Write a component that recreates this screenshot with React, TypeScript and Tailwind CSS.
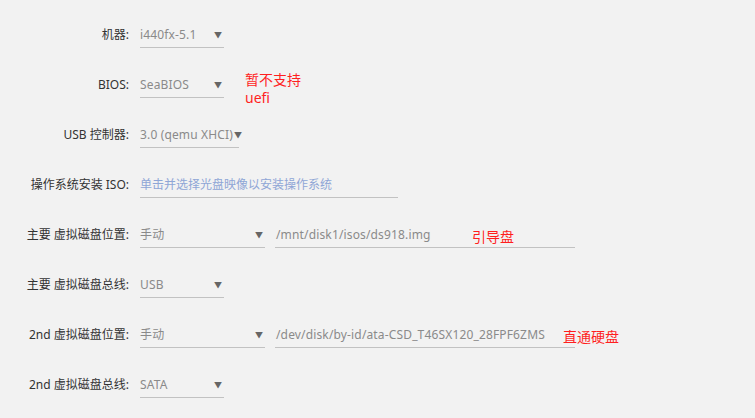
import type { ReactNode } from 'react';

const font = { fontFamily: '"Noto Sans", "Noto Sans CJK SC", sans-serif' };

function Arrow() {
  return <span className="text-[8px] text-[#666] leading-none">▼</span>;
}

function Select({ value, width, tight }: { value: string; width: string; tight?: boolean }) {
  return (
    <div className={`${width} h-[26px] flex items-center border-b border-[#c2c2c2] ${tight ? 'gap-[1px]' : 'justify-between pr-[2px]'}`}>
      <span className="text-[12px] text-[#8a8a8a] tracking-[0.15px] whitespace-nowrap">{value}</span>
      <Arrow />
    </div>
  );
}

function Row({ label, children }: { label: string; children: ReactNode }) {
  return (
    <div className="flex items-start h-[26px] mb-[24px]">
      <div className="w-[130px] pr-[1px] h-[26px] flex items-center justify-end text-[12px] text-[#333] whitespace-nowrap">
        {label}
      </div>
      <div className="ml-[10px] flex items-start">{children}</div>
    </div>
  );
}

function PathInput({ value, note, noteLeft }: { value: string; note: string; noteLeft: string }) {
  return (
    <div className="relative ml-[10px] w-[300px] h-[26px] flex items-center border-b border-[#c2c2c2]">
      <span className="pl-[1px] text-[12px] text-[#8a8a8a] tracking-[0.15px] whitespace-nowrap">{value}</span>
      <span className={`absolute top-[4px] ${noteLeft} text-[14px] text-[#ff1f1f] whitespace-nowrap`}>{note}</span>
    </div>
  );
}

export default function App() {
  return (
    <div className="w-[755px] h-[418px] bg-[#f2f2f2] pt-[22px] overflow-hidden" style={font}>
      <Row label="机器:">
        <Select value="i440fx-5.1" width="w-[84px]" />
      </Row>
      <Row label="BIOS:">
        <Select value="SeaBIOS" width="w-[84px]" />
        <div className="ml-[21px] mt-[-1px] text-[14px] leading-[18px] text-[#ff1f1f]">
          暂不支持
          <br />
          uefi
        </div>
      </Row>
      <Row label="USB 控制器:">
        <Select value="3.0 (qemu XHCI)" width="w-[99px]" tight />
      </Row>
      <Row label="操作系统安装 ISO:">
        <div className="w-[258px] h-[26px] flex items-center border-b border-[#c2c2c2]">
          <span className="text-[12px] text-[#8fa6d6] whitespace-nowrap">单击并选择光盘映像以安装操作系统</span>
        </div>
      </Row>
      <Row label="主要 虚拟磁盘位置:">
        <Select value="手动" width="w-[125px]" />
        <PathInput value="/mnt/disk1/isos/ds918.img" note="引导盘" noteLeft="left-[197px]" />
      </Row>
      <Row label="主要 虚拟磁盘总线:">
        <Select value="USB" width="w-[84px]" />
      </Row>
      <Row label="2nd 虚拟磁盘位置:">
        <Select value="手动" width="w-[125px]" />
        <PathInput value="/dev/disk/by-id/ata-CSD_T46SX120_28FPF6ZMS" note="直通硬盘" noteLeft="left-[288px]" />
      </Row>
      <Row label="2nd 虚拟磁盘总线:">
        <Select value="SATA" width="w-[84px]" />
      </Row>
    </div>
  );
}
